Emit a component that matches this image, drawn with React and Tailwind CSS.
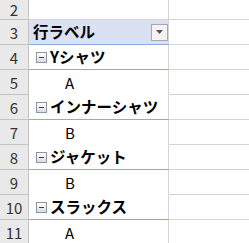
const rows = [
  { n: 2, kind: "blank" },
  { n: 3, kind: "head", label: "行ラベル" },
  { n: 4, kind: "group", label: "Yシャツ" },
  { n: 5, kind: "item", label: "A" },
  { n: 6, kind: "group", label: "インナーシャツ" },
  { n: 7, kind: "item", label: "B" },
  { n: 8, kind: "group", label: "ジャケット" },
  { n: 9, kind: "item", label: "B" },
  { n: 10, kind: "group", label: "スラックス" },
  { n: 11, kind: "item", label: "A" },
];

const font = { fontFamily: '"Noto Sans CJK JP", "Noto Sans", sans-serif' };

function Collapse() {
  return (
    <span className="flex h-[11px] w-[11px] shrink-0 items-center justify-center border border-[#8f959c] bg-gradient-to-b from-white to-[#d8dde4]">
      <span className="h-px w-[5px] bg-[#3c3c3c]" />
    </span>
  );
}

function FilterButton() {
  return (
    <span className="flex h-[17px] w-[17px] items-center justify-center border border-[#a8a8a8] bg-[#f3f3f3]">
      <svg width="7" height="4" viewBox="0 0 7 4">
        <path d="M0 0H7L3.5 4Z" fill="#555" />
      </svg>
    </span>
  );
}

function CellA({ row }) {
  if (row.kind === "blank") {
    return <div className="h-full w-[140px] border-b border-r border-b-[#d4d4d4] border-r-[#d4d4d4]" />;
  }
  if (row.kind === "head") {
    return (
      <div className="flex h-full w-[140px] items-center justify-between border-b border-r border-b-[#8ea9db] border-r-[#d4d4d4] bg-[#d9e1f2] pl-[4px]">
        <span className="text-[15.5px] font-bold leading-none text-black">{row.label}</span>
        <FilterButton />
      </div>
    );
  }
  if (row.kind === "group") {
    return (
      <div className="flex h-full w-[140px] items-center gap-[3px] border-b border-r border-b-[#8ea9db] border-r-[#d4d4d4] pl-[7px]">
        <Collapse />
        <span className="whitespace-nowrap text-[15.5px] font-bold leading-none text-black">{row.label}</span>
      </div>
    );
  }
  return (
    <div className="flex h-full w-[140px] items-center border-b border-r border-b-white border-r-[#d4d4d4] pl-[36px]">
      <span className="text-[15px] leading-none text-black">{row.label}</span>
    </div>
  );
}

export default function App() {
  return (
    <div className="h-[243px] w-[249px] overflow-hidden bg-white" style={font}>
      {rows.map((row) => (
        <div key={row.n} className={`flex ${row.n === 2 ? "h-[20px]" : "h-[25px]"}`}>
          <div className="flex h-full w-[29px] shrink-0 items-center justify-center border-b border-r border-[#c4c4c4] bg-[#e9e9e9] text-[15px] leading-none text-[#333]">
            {row.n}
          </div>
          <CellA row={row} />
          <div className="h-full flex-1 border-b border-[#d4d4d4]" />
        </div>
      ))}
    </div>
  );
}
